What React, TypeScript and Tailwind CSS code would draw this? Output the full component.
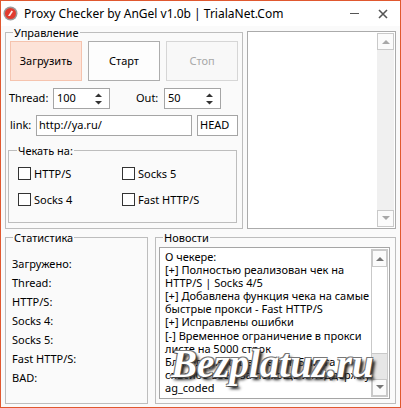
import React from "react";

const font = "[font-family:'Noto_Sans',sans-serif]";

function Spinner({ value }: { value: string }) {
  return (
    <div className="w-[57px] h-[21px] border border-[#a5a5a5] bg-white flex items-center pl-[3px] pr-[6px]">
      <span className="flex-1 text-[11px]">{value}</span>
      <svg width="9" height="14" viewBox="0 0 9 14">
        <path d="M1 5 L4.5 1.5 L8 5 Z" fill="#333" />
        <path d="M1 9 L4.5 12.5 L8 9 Z" fill="#333" />
      </svg>
    </div>
  );
}

function Check({ label }: { label: string }) {
  return (
    <div className="flex items-center gap-[3px] h-[13px]">
      <div className="w-[13px] h-[13px] border border-[#333] bg-white" />
      <span className="text-[11px] leading-[13px]">{label}</span>
    </div>
  );
}

function ScrollBtn({ up, light }: { up: boolean; light?: boolean }) {
  return (
    <div className="h-[17px] border border-[#c9c9c9] bg-[#fbfbfb] flex items-center justify-center">
      <svg width="8" height="5" viewBox="0 0 8 5">
        <path d={up ? "M0 5 L4 1 L8 5 Z" : "M0 0 L4 4 L8 0 Z"} fill={light ? "#a8a8a8" : "#777"} />
      </svg>
    </div>
  );
}

const news = [
  "О чекере:",
  "[+] Полностью реализован чек на",
  "HTTP/S | Socks 4/5",
  "[+] Добавлена функция чека на самые",
  "быстрые прокси - Fast HTTP/S",
  "[+] Исправлены ошибки",
  "[-] Временное ограничение в прокси",
  "листе на 5000 строк",
  "Благодарность за тесты: Бумага",
  "спасибо всем за помощь и поддержку",
  "ag_coded",
];

const stats = ["Загружено:", "Thread:", "HTTP/S:", "Socks 4:", "Socks 5:", "Fast HTTP/S:", "BAD:"];

export default function App() {
  return (
    <div className={`w-[401px] h-[408px] border border-[#e0582f] bg-[#fafafa] text-black flex flex-col overflow-hidden ${font}`}>
      {/* title bar */}
      <div className="h-[25px] bg-white flex items-center pl-[2px] shrink-0">
        <svg width="15" height="15" viewBox="0 0 15 15">
          <circle cx="7.5" cy="7.5" r="7" fill="#9a9a9a" />
          <circle cx="7.5" cy="7.5" r="5.5" fill="#e23b2e" />
          <path d="M5 10 L8.5 4.5 L10 5.5 L7 10 Z" fill="#fff" opacity="0.9" />
        </svg>
        <span className="ml-[6px] text-[12px] leading-none">Proxy Checker by AnGel v1.0b | TrialaNet.Com</span>
        <div className="ml-auto flex items-center mr-[12px] gap-[19px]">
          <div className="w-[9px] h-px bg-[#555]" />
          <svg width="10" height="10" viewBox="0 0 10 10">
            <path d="M1 1 L9 9 M9 1 L1 9" stroke="#555" strokeWidth="1.6" />
          </svg>
        </div>
      </div>

      {/* top row */}
      <div className="flex items-start px-[4px] gap-[4px]">
        <fieldset className="w-[238px] h-[203px] border border-[#bdbdbd] pl-[4px]">
          <legend className="ml-[3px] px-[1px] text-[11px] leading-[13px]">Управление</legend>
          <div className="mt-[2px] flex gap-[6px]">
            <button className="w-[72px] h-[40px] bg-[#fde3d8] border border-[#f5c3ae] text-[11px]">Загрузить</button>
            <button className="w-[72px] h-[40px] bg-[#fdfdfd] border border-[#adadad] text-[11px]">Старт</button>
            <button className="w-[72px] h-[40px] bg-[#f8f8f8] border border-[#d6d6d6] text-[11px] text-[#a8a8a8]">Стоп</button>
          </div>
          <div className="mt-[7px] flex items-center text-[11px] -ml-[1px]">
            <span className="w-[44px]">Thread:</span>
            <Spinner value="100" />
            <span className="ml-[26px] w-[28px]">Out:</span>
            <Spinner value="50" />
          </div>
          <div className="mt-[6px] flex items-center text-[11px]">
            <span className="w-[26px]">link:</span>
            <div className="w-[156px] h-[21px] border border-[#a5a5a5] bg-white flex items-center pl-[2px]">http://ya.ru/</div>
            <div className="ml-[5px] w-[41px] h-[21px] border border-[#a5a5a5] bg-white flex items-center pl-[2px]">HEAD</div>
          </div>
          <fieldset className="mt-[8px] -ml-[2px] w-[229px] h-[79px] border border-[#bdbdbd] pl-[9px]">
            <legend className="ml-[-1px] px-[1px] text-[11px] leading-[13px]">Чекать на:</legend>
            <div className="mt-[10px] grid grid-cols-[104px_1fr] gap-y-[13px]">
              <Check label="HTTP/S" />
              <Check label="Socks 5" />
              <Check label="Socks 4" />
              <Check label="Fast HTTP/S" />
            </div>
          </fieldset>
        </fieldset>

        <div className="mt-[5px] w-[149px] h-[198px] border border-[#ababab] bg-white p-px flex justify-end">
          <div className="w-[17px] h-full bg-[#f0f0f0] flex flex-col justify-between">
            <ScrollBtn up light />
            <ScrollBtn up={false} light />
          </div>
        </div>
      </div>

      {/* bottom row */}
      <div className="mt-[2px] flex items-start px-[4px] gap-[7px]">
        <fieldset className="w-[143px] h-[173px] border border-[#bdbdbd] pl-[6px]">
          <legend className="ml-[1px] px-[1px] text-[11px] leading-[13px]">Статистика</legend>
          <div className="mt-[10px] flex flex-col text-[11px] leading-[19px]">
            {stats.map((s) => (
              <span key={s}>{s}</span>
            ))}
          </div>
        </fieldset>

        <fieldset className="w-[241px] h-[173px] border border-[#bdbdbd] pl-[3px]">
          <legend className="ml-[4px] px-[1px] text-[11px] leading-[13px]">Новости</legend>
          <div className="relative mt-[3px] w-[231px] h-[152px] border border-[#a5a5a5] bg-white flex overflow-hidden">
            <div className="flex-1 pl-[5px] pt-[2px] text-[11px] leading-[13.1px] whitespace-nowrap">
              {news.map((l, i) => (
                <div key={i}>{l}</div>
              ))}
            </div>
            <div className="w-[17px] my-px mr-px border border-[#c9c9c9] flex flex-col">
              <ScrollBtn up />
              <div className="h-[87px] bg-white border-b border-[#c9c9c9]" />
              <div className="flex-1 bg-[#e6e6e6]" />
              <ScrollBtn up={false} />
            </div>
            <span className="absolute left-[11px] top-[96px] text-[39px] leading-none font-bold italic text-white [font-family:'Liberation_Serif',serif] [text-shadow:1px_1px_0_#444,-1px_-1px_0_#777,1px_-1px_0_#777,-1px_1px_0_#777,3px_3px_3px_#222]">
              Bezplatuz.ru
            </span>
          </div>
        </fieldset>
      </div>
    </div>
  );
}
